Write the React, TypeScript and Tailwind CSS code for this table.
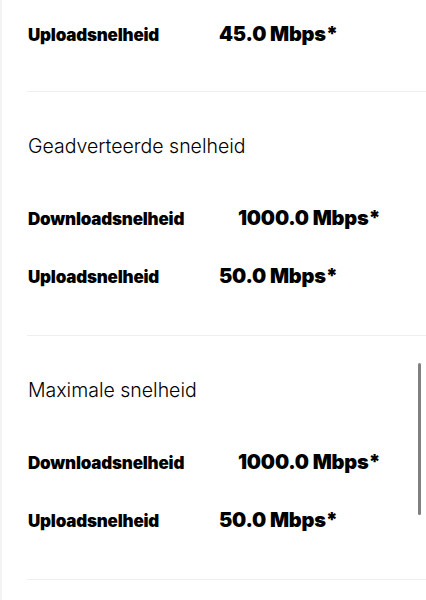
import React from 'react';

type Row = { label: string; value: string; labelW: string };

const download = (value: string): Row => ({ label: 'Downloadsnelheid', value, labelW: 'w-[210px]' });
const upload = (value: string): Row => ({ label: 'Uploadsnelheid', value, labelW: 'w-[191px]' });

const SpeedRow: React.FC<{ row: Row }> = ({ row }) => (
  <div className="h-[58px] flex items-center">
    <div className="flex items-baseline">
      <span className={`${row.labelW} shrink-0 text-[17px] font-black tracking-[-0.2px] text-black`}>{row.label}</span>
      <span className="text-[20px] font-black tracking-[-0.2px] text-black">{row.value}</span>
    </div>
  </div>
);

const Divider = () => <div className="ml-[25px] h-px bg-[#efefef]"></div>;

const Section: React.FC<{ title: string; rows: Row[] }> = ({ title, rows }) => (
  <div className="pl-[26px] pt-[41px] pb-[30px]">
    <h2 className="h-7 flex items-center text-[19.5px] font-light text-black">{title}</h2>
    <div className="mt-[28px]">
      {rows.map((r, i) => (
        <SpeedRow key={i} row={r} />
      ))}
    </div>
  </div>
);

const App: React.FC = () => {
  return (
    <div className="relative w-[426px] h-[600px] overflow-hidden bg-white border-l-2 border-[#f3f3f3] font-['Inter',sans-serif]">
      {/* tail of the previous block */}
      <div className="pl-[26px] pt-[5px] pb-[28px]">
        <SpeedRow row={upload('45.0 Mbps*')} />
      </div>
      <Divider />

      <Section title="Geadverteerde snelheid" rows={[download('1000.0 Mbps*'), upload('50.0 Mbps*')]} />
      <Divider />

      <Section title="Maximale snelheid" rows={[download('1000.0 Mbps*'), upload('50.0 Mbps*')]} />
      <Divider />

      {/* scrollbar thumb */}
      <div className="absolute right-[5px] top-[363px] w-[3px] h-[152px] rounded-full bg-[#808080]"></div>
    </div>
  );
};

export default App;
